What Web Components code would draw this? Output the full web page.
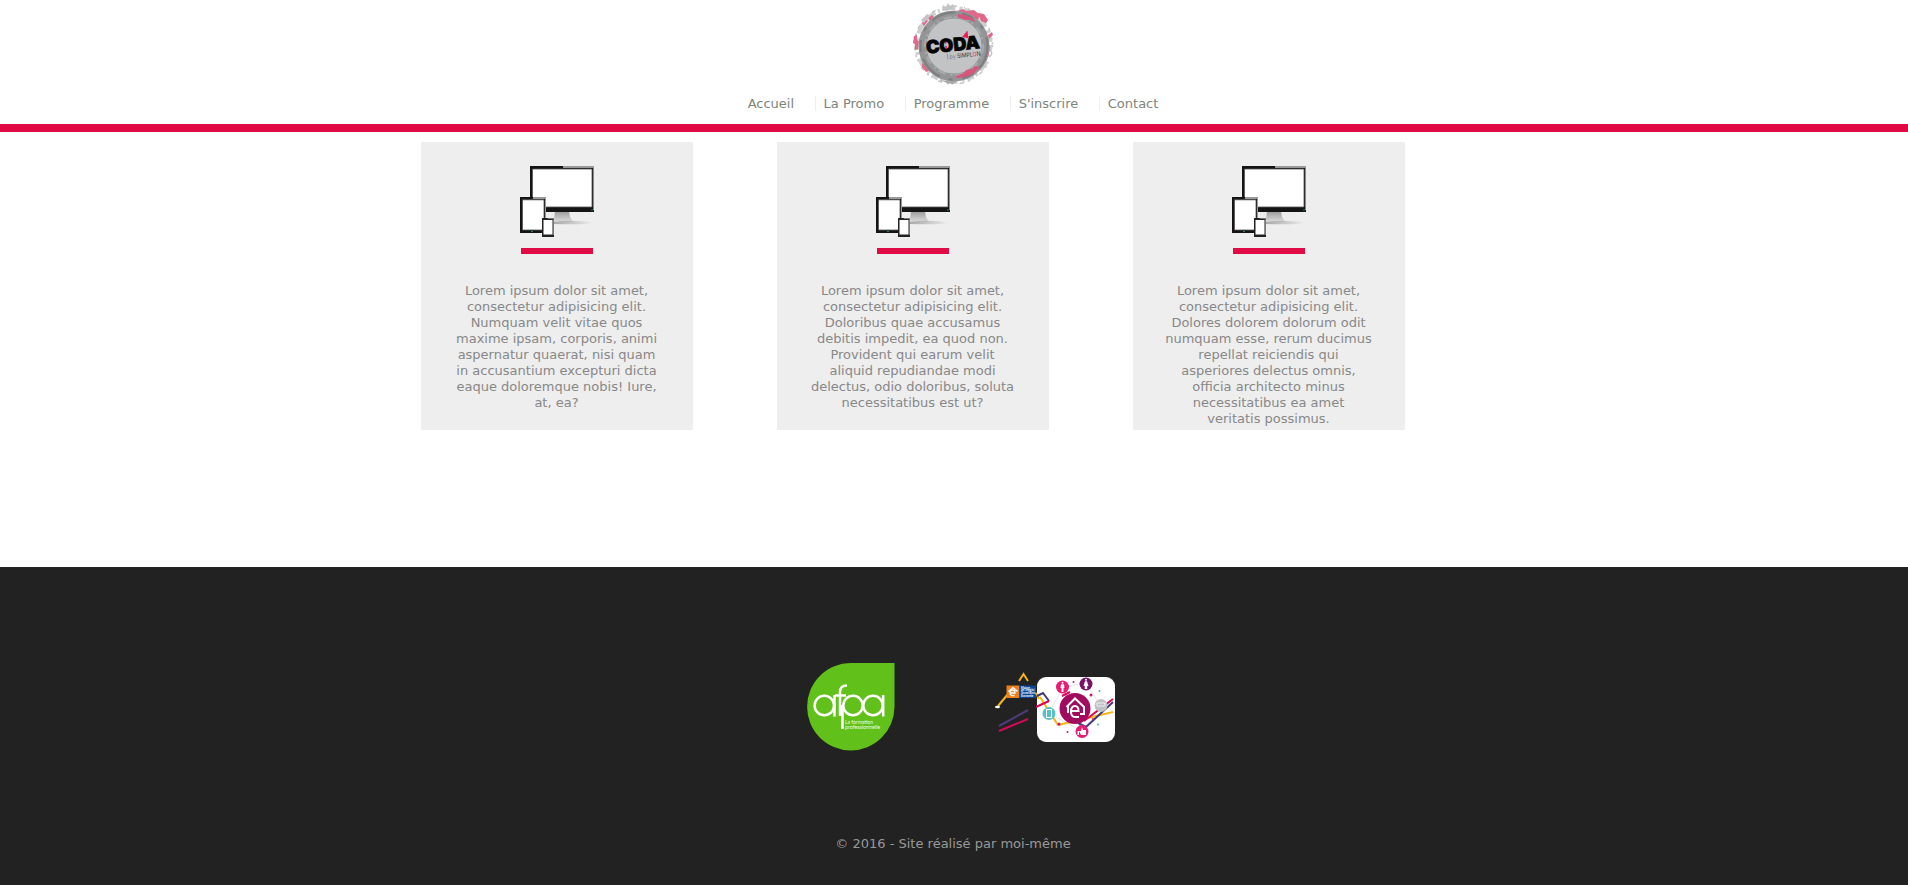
<!DOCTYPE html>
<html lang="fr">
<head>
<meta charset="utf-8">
<title>CODA</title>
<style>
body{margin:0;background:#fff;font:13px/16px "DejaVu Sans",sans-serif;color:#888}
</style>
</head>
<body>
<coda-page></coda-page>
<script>
function define(name, html){
  customElements.define(name, class extends HTMLElement{
    constructor(){super();this.attachShadow({mode:'open'}).innerHTML=html;}
  });
}

define('coda-logo', `<style>:host{display:block;width:84px;height:86px}svg{display:block}</style>
<svg width="84" height="86" viewBox="912 0 84 86">
<g fill="none">
<circle cx="953.500" cy="45" r="37" stroke="#cfcfcf" stroke-width="4" stroke-dasharray="7 3 2 5 11 4 3 2"/>
<circle cx="953.500" cy="45" r="39" stroke="#c4c4c4" stroke-width="1.500" stroke-dasharray="2 5 4 7 1 3"/>
</g>
<g fill="#e2688b">
<path d="M957 11l6-2 3 2 8-1 6 5-2 5-8-3-6 2-2-4-4 1zM978 13l6 1 4 6-2 3-5-2zM922 23l3-4 3 2-4 5zM928 18l4-3 2 2-4 4z"/>
<path d="M914 36l3-1 0 5 2 1-1 8-3 1 0-6-2-1zM988 35l4-3 1 3-4 4zM986 49l4-3-1 8-3 8-2-2zM922 63l5 2 2 6-3 1-4-5z"/>
</g>
<path d="M942 11l1-6 3 2 2-4 2 3 3-2 1 5-6 1zM921 20l6-6 3 2-6 7z" fill="#c4c4c4"/>
<path d="M940 80l8 1 9 0-4 3-6-1z" fill="#aaa"/>
<circle cx="954" cy="46" r="31.500" fill="#c1c3c5" stroke="#939597" stroke-width="8"/>
<circle cx="954" cy="46" r="33.500" fill="none" stroke="#7c7e80" stroke-width="2" stroke-dasharray="25 7 12 10 4 9"/>
<circle cx="954" cy="46" r="29" fill="none" stroke="#a8aaac" stroke-width="2" stroke-dasharray="8 3 2 5"/>
<path d="M958 14q11 0 18 8l-6-2-5 0-7-3zM956 76l8-3 2-3 6-1 3-3 5 1-7 7-8 3-9 1z" fill="#d6567c"/>
<g transform="rotate(-6 953 46)">
<text x="926" y="51" font-family="Inter,sans-serif" font-weight="900" font-size="18" textLength="54" lengthAdjust="spacingAndGlyphs" fill="#050505" stroke="#050505" stroke-width=".7">CODA</text>
<path d="M963 38l6-6v8z" fill="#ed1b58"/>
<path d="M946 41v2m0 2v3" stroke="#ed1b58" stroke-width="1.600"/>
<path d="M946.500 53v6" stroke="#888" stroke-width=".7"/>
<text x="948.500" y="58.500" font-family="Inter,sans-serif" font-size="6" textLength="31" lengthAdjust="spacingAndGlyphs" fill="#333"><tspan fill="#777">by</tspan> SIMPL<tspan fill="#ed1b58">O</tspan>N</text>
</g></svg>`);

define('nav-item', `<style>
:host{display:block;box-sizing:border-box;height:15px;line-height:15px;padding:0 20.500px 0 8px;border-left:1px solid #eee;white-space:nowrap}
:host([first]){border-color:transparent}:host([last]){padding-right:0}
a{color:#7e847c}</style><a><slot></slot></a>`);

define('site-header', `<style>
:host{display:block;height:124px;border-bottom:8px solid #e00b45}
.logo{display:flex;justify-content:center}
nav{display:flex;justify-content:center;padding-top:10px;margin-right:11px}
</style><div class="logo"><coda-logo></coda-logo></div>
<nav><nav-item first>Accueil</nav-item><nav-item>La Promo</nav-item><nav-item>Programme</nav-item><nav-item>S'inscrire</nav-item><nav-item last>Contact</nav-item></nav>`);

define('device-icon', `<style>:host{display:block;width:76px;height:73px}svg{display:block}</style>
<svg width="76" height="73" viewBox="1 0 76 73">
<defs><linearGradient id="s" x2="0" y2="1"><stop stop-color="#999"/><stop offset="1" stop-color="#ddd"/></linearGradient>
<linearGradient id="t"><stop stop-color="#aaa"/><stop offset="1" stop-color="#aaa" stop-opacity="0"/></linearGradient></defs>
<path d="M37 45h14l1 6 3 5H32l4-3z" fill="url(#s)"/><path d="M36 56q20-3 41 1-16 2-41 1z" fill="url(#t)"/>
<path d="M12 0H76V46H12z" fill="#141414"/><path d="M45 0H76V2H45z" fill="#999"/><path d="M75 2H76V44H75z" fill="#888"/>
<path d="M14.500 3H74V41H14.500z" fill="#fff" stroke="#555" stroke-width=".8"/>
<path d="M2 31H27q1 0 1 1V67H2z" fill="#141414"/><path d="M15 31H28V53H27V33H15z" fill="#999"/><path d="M4.500 33.800H26V64H4.500z" fill="#fff" stroke="#555" stroke-width=".8"/>
<path d="M24 52H36V71H24z" fill="#222"/><path d="M30 52H36V69H35V53H30z" fill="#777"/><path d="M25.500 54H34.500V68.500H25.500z" fill="#fff"/>
<path d="M13 65.500h2M73 44h2" stroke="#277d60" stroke-width="1"/>
</svg>`);

define('promo-card', `<style>
:host{display:flex;flex-direction:column;align-items:center;box-sizing:border-box;width:272px;height:288px;background:#eee;padding:24px 32px 0;text-align:center}
hr{width:72px;height:6px;border:0;margin:9px 0 29px;background:#e00b45}
p{margin:0 1px 0 0;width:207px}
</style><device-icon></device-icon><hr><p><slot></slot></p>`);

define('afpa-logo', `<style>:host{display:block;width:88px;height:88px}svg{display:block}</style>
<svg width="88" height="88" viewBox="0 0 88 88"><path d="M44 0H87.500V44A43.700 43.700 0 1 1 44 0z" fill="#61c11a"/>
<g fill="none" stroke="#fff" stroke-width="2.500"><circle cx="17.300" cy="42.500" r="9.700"/><path d="M27.500 32V53.500M28 32.500h11M33 53V29q0-6.500 7-6.500M35.500 66V42"/><circle cx="46" cy="42.500" r="9.700"/><circle cx="66" cy="42.500" r="9.700"/><path d="M76.200 32V53.500"/></g>
<g font-family="Lato,sans-serif" font-size="5.500" fill="#f0ffe5"><text x="38" y="60.500" textLength="28" lengthAdjust="spacingAndGlyphs">La formation</text><text x="38" y="65.800" textLength="35" lengthAdjust="spacingAndGlyphs">professionnelle</text></g></svg>`);

define('partner-logo', `<style>:host{display:block;width:122px;height:74px}svg{display:block}</style>
<svg width="122" height="74" viewBox="994 670 122 74">
<g fill="none" stroke-width="2">
<path d="M998 706l10-12M1019 681l4.500-7 4.500 7" stroke="#f6b51a"/><path d="M999 726l29-16" stroke="#4c3c7c"/><path d="M999 731l29-12" stroke="#d70856"/></g>
<ellipse cx="997.500" cy="707" rx="2.500" ry="1.300" fill="#fff"/>
<rect x="1037" y="677" width="78" height="65" rx="9" fill="#fff"/>
<path d="M1006.500 685.500H1019.500V698H1006.500z" fill="#f07e19"/><path d="M1019.500 685.500H1036V698H1019.500z" fill="#07479b"/>
<path d="M1008.500 691.500l4.500-4 4.500 4M1010.500 693h4.500q0-3-2.500-3-2.500 0-2.500 3t4.500 2.500" fill="none" stroke="#fff" stroke-width="1.300"/>
<g font-family="Lato,sans-serif" font-weight="700" font-size="2.800" fill="#fff"><text x="1021" y="688.500">Maison</text><text x="1021" y="691.300">de l'emploi</text><text x="1021" y="694.100">Grand Blois</text><text x="1021" y="696.900">Economie</text></g>
<g fill="none" stroke="#d5d5d5" stroke-width=".6"><path d="M1049 713l14-26 23-4 15 23-19 25-32-17M1062 687l20 44"/></g>
<g fill="none" stroke-width="2"><path d="M1036 693l3 6M1040 697l18 28 55-13" stroke="#f6b51a"/><path d="M1037 696l6-3 6 8M1113 702l-27 25-8-4" stroke="#413a7d"/><path d="M1036 707l13-6M1062 696l8-4M1084 721l29-22" stroke="#d70856"/></g>
<circle cx="1075" cy="708.500" r="15.500" fill="#a20c5e"/>
<path d="M1066.500 707l8.500-8.500 9 8.500v7h-4M1068 706v7M1071.500 711h7q0-5-3.500-5-4 0-4 5.500t4 5.500h4" fill="none" stroke="#fff" stroke-width="2"/>
<circle cx="1062.500" cy="687" r="6.500" fill="#e61b72"/><circle cx="1086" cy="684" r="6.500" fill="#751468"/><circle cx="1049" cy="713.500" r="6.500" fill="#5abfc8"/><circle cx="1101" cy="705.500" r="6.500" fill="#bfc1c3"/><circle cx="1082" cy="731.500" r="6.500" fill="#e61b72"/>
<g fill="#fff"><circle cx="1062.500" cy="682.800" r="1"/><path d="M1061 684.300h3l.5 3.500-1 .2v4h-2v-4l-1-.2z"/><circle cx="1086" cy="679.800" r="1"/><path d="M1085 681.300h2l1.500 4.500-1.300.2v3h-2.400v-3l-1.300-.2z"/></g>
<rect x="1046.500" y="709.500" width="5" height="8" fill="none" stroke="#fff"/><path d="M1097 703h8v3h-8z" fill="none" stroke="#eee"/><path d="M1079 731h2l1-4 1 3h3v5h-5zM1077.500 731h1.500v4h-1.500z" fill="#fff"/>
<g fill="#c81a6c"><circle cx="1073.500" cy="682" r="1"/><circle cx="1091" cy="695" r="1.500"/><circle cx="1067.500" cy="732" r="1"/><circle cx="1059" cy="724" r="1.500"/><circle cx="1093" cy="719" r="1"/></g><g fill="#41b6bf"><circle cx="1099.500" cy="691" r="1"/><circle cx="1098" cy="724.500" r="1"/></g>
</svg>`);

define('site-footer', `<style>
:host{display:flex;flex-direction:column;align-items:center;box-sizing:border-box;height:318px;background:#222;padding-top:96px;color:#999}
.partners{display:flex;gap:99px;margin-left:14px}
partner-logo{margin-top:7px}
p{margin:85px 2px 0 0}
</style><div class="partners"><afpa-logo></afpa-logo><partner-logo></partner-logo></div><p><slot></slot></p>`);

define('coda-page', `<style>
:host{display:flex;flex-direction:column;height:885px;overflow:hidden}
main{display:flex;gap:84px;padding:10px 0 0 421px;flex:1}
</style><site-header></site-header><main>
<promo-card>Lorem ipsum dolor sit amet, consectetur adipisicing elit. Numquam velit vitae quos maxime ipsam, corporis, animi aspernatur quaerat, nisi quam in accusantium excepturi dicta eaque doloremque nobis! Iure, at, ea?</promo-card>
<promo-card>Lorem ipsum dolor sit amet, consectetur adipisicing elit. Doloribus quae accusamus debitis impedit, ea quod non. Provident qui earum velit aliquid repudiandae modi delectus, odio doloribus, soluta necessitatibus est ut?</promo-card>
<promo-card>Lorem ipsum dolor sit amet, consectetur adipisicing elit. Dolores dolorem dolorum odit numquam esse, rerum ducimus repellat reiciendis qui asperiores delectus omnis, officia architecto minus necessitatibus ea amet veritatis possimus.</promo-card>
</main><site-footer>© 2016 - Site réalisé par moi-même</site-footer>`);
</script>
</body>
</html>
